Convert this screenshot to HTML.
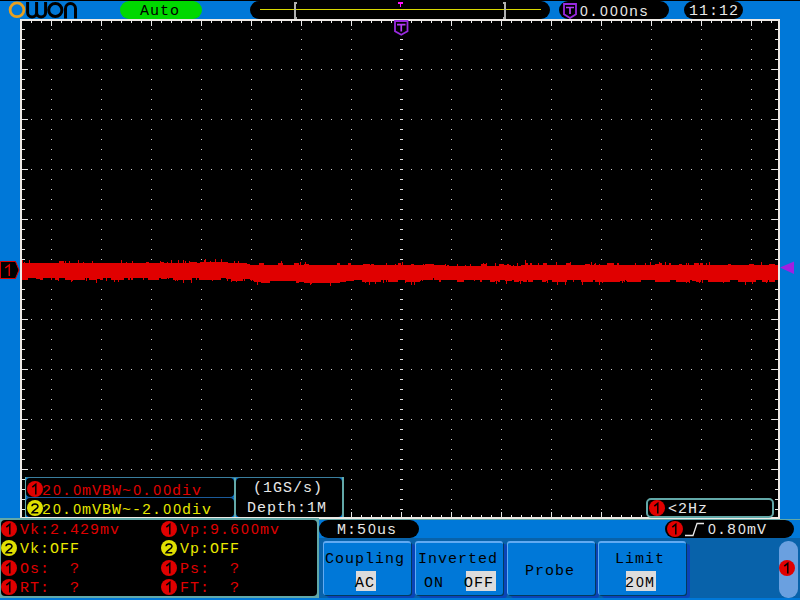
<!DOCTYPE html>
<html><head><meta charset="utf-8"><style>
*{margin:0;padding:0;box-sizing:border-box}
html,body{width:800px;height:600px;overflow:hidden;background:#0078d8}
body{position:relative;font-family:"Liberation Mono",monospace;font-size:15px;letter-spacing:1px;line-height:20px}
.a{position:absolute}
.t{position:absolute;white-space:pre;line-height:20px;height:20px}
.pill{position:absolute;background:#000;border-radius:9px/9px}
.circ{position:absolute;width:16px;height:16px;border-radius:50%;font-family:"Liberation Sans",sans-serif;font-size:13px;letter-spacing:0;line-height:16px;text-align:center;color:#000}
.btn{position:absolute;top:541px;height:54px;background:#0078d8;border-radius:3px;border-top:2px solid #62aaf2;border-left:1px solid #62aaf2;box-shadow:1px 1px 0 0 #033a5e,4px 3px 0 0 #0a44b8}
.z{display:inline-block;width:10px;text-align:center;font-family:"Liberation Sans",sans-serif;font-size:14px;letter-spacing:0;line-height:0}
.hl{position:absolute;background:#dcdcdc;height:20px}
</style></head><body>
<svg width="0" height="0" style="position:absolute">
 <symbol id="c1" viewBox="0 0 16 16"><circle cx="8" cy="8" r="8" fill="#e00000"/><path d="M5.3 6.2L8.8 3.3V13.6" fill="none" stroke="#000" stroke-width="1.5"/></symbol>
 <symbol id="c2" viewBox="0 0 16 16"><circle cx="8" cy="8" r="8" fill="#e0e000"/><path d="M5 6.3C5 3.4 11 3.2 11 6.4C11 8.6 6 10.2 5 12.8H11.3" fill="none" stroke="#000" stroke-width="1.5"/></symbol>
</svg>
<div class="a" style="left:0;top:0;width:800px;height:1px;background:#000"></div>
<svg class="a" style="left:0;top:0" width="80" height="20" viewBox="0 0 80 20">
 <circle cx="17" cy="9.8" r="6.9" fill="none" stroke="#e8a020" stroke-width="2.8"/>
 <path d="M27.6 2V12.6a4.5 4.5 0 0 0 9 0V2M36.6 12.6a4.5 4.5 0 0 0 9 0V2" fill="none" stroke="#000" stroke-width="3"/>
 <circle cx="55.3" cy="10" r="6.6" fill="none" stroke="#000" stroke-width="3"/>
 <path d="M65.5 18.5V8.5a5 5 0 0 1 10 0V18.5" fill="none" stroke="#000" stroke-width="3"/>
</svg>
<div class="a" style="left:120px;top:1px;width:82px;height:18px;background:#00d800;border-radius:9px"></div>
<div class="t" style="left:140px;top:2px;color:#000">Auto</div>
<div class="pill" style="left:250px;top:1px;width:300px;height:18px"></div>
<div class="a" style="left:260px;top:9px;width:281px;height:1px;background:#d8d800"></div>
<svg class="a" style="left:0;top:0" width="800" height="40">
 <path d="M294 2h3v2h-1v13h1v2h-3z" fill="#b0b0b0"/>
 <path d="M506 2h-3v2h1v13h-1v2h3z" fill="#b0b0b0"/>
 <path d="M398 2h5v2h-2v3h-1v-3h-2z" fill="#ff10ff"/>
</svg>
<div class="pill" style="left:559px;top:1px;width:110px;height:18px"></div>
<svg class="a" style="left:563px;top:3px" width="14" height="16" viewBox="0 0 14 16">
 <path d="M1 1h12v10.2l-6 3.8l-6-3.8z" fill="none" stroke="#9a2ae0" stroke-width="1.8"/>
 <path d="M3 4.5h8M7 4.5v6.5" stroke="#b43cf5" stroke-width="1.7"/>
</svg>
<div class="t" style="left:579px;top:3px;color:#e8e8e8"><span class="z">0</span>.<span class="z">0</span><span class="z">0</span><span class="z">0</span>ns</div>
<div class="pill" style="left:684px;top:1px;width:59px;height:18px"></div>
<div class="t" style="left:689px;top:2px;color:#e8e8e8">11:12</div>

<div class="a" style="left:20px;top:19px;width:760px;height:500px;background:#eeeae6"></div>
<div class="a" style="left:22px;top:21px;width:756px;height:496px;background:#000"></div>
<svg class="a" style="left:0;top:0" width="800" height="600">
<path fill="#c8c8c8" d="M51 29h1v1h-1zM51 39h1v1h-1zM51 49h1v1h-1zM51 59h1v1h-1zM51 69h1v1h-1zM51 79h1v1h-1zM51 89h1v1h-1zM51 99h1v1h-1zM51 109h1v1h-1zM51 119h1v1h-1zM51 129h1v1h-1zM51 139h1v1h-1zM51 149h1v1h-1zM51 159h1v1h-1zM51 169h1v1h-1zM51 179h1v1h-1zM51 189h1v1h-1zM51 199h1v1h-1zM51 209h1v1h-1zM51 219h1v1h-1zM51 229h1v1h-1zM51 239h1v1h-1zM51 249h1v1h-1zM51 259h1v1h-1zM51 269h1v1h-1zM51 279h1v1h-1zM51 289h1v1h-1zM51 299h1v1h-1zM51 309h1v1h-1zM51 319h1v1h-1zM51 329h1v1h-1zM51 339h1v1h-1zM51 349h1v1h-1zM51 359h1v1h-1zM51 369h1v1h-1zM51 379h1v1h-1zM51 389h1v1h-1zM51 399h1v1h-1zM51 409h1v1h-1zM51 419h1v1h-1zM51 429h1v1h-1zM51 439h1v1h-1zM51 449h1v1h-1zM51 459h1v1h-1zM51 469h1v1h-1zM51 479h1v1h-1zM51 489h1v1h-1zM51 499h1v1h-1zM51 509h1v1h-1zM101 29h1v1h-1zM101 39h1v1h-1zM101 49h1v1h-1zM101 59h1v1h-1zM101 69h1v1h-1zM101 79h1v1h-1zM101 89h1v1h-1zM101 99h1v1h-1zM101 109h1v1h-1zM101 119h1v1h-1zM101 129h1v1h-1zM101 139h1v1h-1zM101 149h1v1h-1zM101 159h1v1h-1zM101 169h1v1h-1zM101 179h1v1h-1zM101 189h1v1h-1zM101 199h1v1h-1zM101 209h1v1h-1zM101 219h1v1h-1zM101 229h1v1h-1zM101 239h1v1h-1zM101 249h1v1h-1zM101 259h1v1h-1zM101 269h1v1h-1zM101 279h1v1h-1zM101 289h1v1h-1zM101 299h1v1h-1zM101 309h1v1h-1zM101 319h1v1h-1zM101 329h1v1h-1zM101 339h1v1h-1zM101 349h1v1h-1zM101 359h1v1h-1zM101 369h1v1h-1zM101 379h1v1h-1zM101 389h1v1h-1zM101 399h1v1h-1zM101 409h1v1h-1zM101 419h1v1h-1zM101 429h1v1h-1zM101 439h1v1h-1zM101 449h1v1h-1zM101 459h1v1h-1zM101 469h1v1h-1zM101 479h1v1h-1zM101 489h1v1h-1zM101 499h1v1h-1zM101 509h1v1h-1zM151 29h1v1h-1zM151 39h1v1h-1zM151 49h1v1h-1zM151 59h1v1h-1zM151 69h1v1h-1zM151 79h1v1h-1zM151 89h1v1h-1zM151 99h1v1h-1zM151 109h1v1h-1zM151 119h1v1h-1zM151 129h1v1h-1zM151 139h1v1h-1zM151 149h1v1h-1zM151 159h1v1h-1zM151 169h1v1h-1zM151 179h1v1h-1zM151 189h1v1h-1zM151 199h1v1h-1zM151 209h1v1h-1zM151 219h1v1h-1zM151 229h1v1h-1zM151 239h1v1h-1zM151 249h1v1h-1zM151 259h1v1h-1zM151 269h1v1h-1zM151 279h1v1h-1zM151 289h1v1h-1zM151 299h1v1h-1zM151 309h1v1h-1zM151 319h1v1h-1zM151 329h1v1h-1zM151 339h1v1h-1zM151 349h1v1h-1zM151 359h1v1h-1zM151 369h1v1h-1zM151 379h1v1h-1zM151 389h1v1h-1zM151 399h1v1h-1zM151 409h1v1h-1zM151 419h1v1h-1zM151 429h1v1h-1zM151 439h1v1h-1zM151 449h1v1h-1zM151 459h1v1h-1zM151 469h1v1h-1zM151 479h1v1h-1zM151 489h1v1h-1zM151 499h1v1h-1zM151 509h1v1h-1zM201 29h1v1h-1zM201 39h1v1h-1zM201 49h1v1h-1zM201 59h1v1h-1zM201 69h1v1h-1zM201 79h1v1h-1zM201 89h1v1h-1zM201 99h1v1h-1zM201 109h1v1h-1zM201 119h1v1h-1zM201 129h1v1h-1zM201 139h1v1h-1zM201 149h1v1h-1zM201 159h1v1h-1zM201 169h1v1h-1zM201 179h1v1h-1zM201 189h1v1h-1zM201 199h1v1h-1zM201 209h1v1h-1zM201 219h1v1h-1zM201 229h1v1h-1zM201 239h1v1h-1zM201 249h1v1h-1zM201 259h1v1h-1zM201 269h1v1h-1zM201 279h1v1h-1zM201 289h1v1h-1zM201 299h1v1h-1zM201 309h1v1h-1zM201 319h1v1h-1zM201 329h1v1h-1zM201 339h1v1h-1zM201 349h1v1h-1zM201 359h1v1h-1zM201 369h1v1h-1zM201 379h1v1h-1zM201 389h1v1h-1zM201 399h1v1h-1zM201 409h1v1h-1zM201 419h1v1h-1zM201 429h1v1h-1zM201 439h1v1h-1zM201 449h1v1h-1zM201 459h1v1h-1zM201 469h1v1h-1zM201 479h1v1h-1zM201 489h1v1h-1zM201 499h1v1h-1zM201 509h1v1h-1zM251 29h1v1h-1zM251 39h1v1h-1zM251 49h1v1h-1zM251 59h1v1h-1zM251 69h1v1h-1zM251 79h1v1h-1zM251 89h1v1h-1zM251 99h1v1h-1zM251 109h1v1h-1zM251 119h1v1h-1zM251 129h1v1h-1zM251 139h1v1h-1zM251 149h1v1h-1zM251 159h1v1h-1zM251 169h1v1h-1zM251 179h1v1h-1zM251 189h1v1h-1zM251 199h1v1h-1zM251 209h1v1h-1zM251 219h1v1h-1zM251 229h1v1h-1zM251 239h1v1h-1zM251 249h1v1h-1zM251 259h1v1h-1zM251 269h1v1h-1zM251 279h1v1h-1zM251 289h1v1h-1zM251 299h1v1h-1zM251 309h1v1h-1zM251 319h1v1h-1zM251 329h1v1h-1zM251 339h1v1h-1zM251 349h1v1h-1zM251 359h1v1h-1zM251 369h1v1h-1zM251 379h1v1h-1zM251 389h1v1h-1zM251 399h1v1h-1zM251 409h1v1h-1zM251 419h1v1h-1zM251 429h1v1h-1zM251 439h1v1h-1zM251 449h1v1h-1zM251 459h1v1h-1zM251 469h1v1h-1zM251 479h1v1h-1zM251 489h1v1h-1zM251 499h1v1h-1zM251 509h1v1h-1zM301 29h1v1h-1zM301 39h1v1h-1zM301 49h1v1h-1zM301 59h1v1h-1zM301 69h1v1h-1zM301 79h1v1h-1zM301 89h1v1h-1zM301 99h1v1h-1zM301 109h1v1h-1zM301 119h1v1h-1zM301 129h1v1h-1zM301 139h1v1h-1zM301 149h1v1h-1zM301 159h1v1h-1zM301 169h1v1h-1zM301 179h1v1h-1zM301 189h1v1h-1zM301 199h1v1h-1zM301 209h1v1h-1zM301 219h1v1h-1zM301 229h1v1h-1zM301 239h1v1h-1zM301 249h1v1h-1zM301 259h1v1h-1zM301 269h1v1h-1zM301 279h1v1h-1zM301 289h1v1h-1zM301 299h1v1h-1zM301 309h1v1h-1zM301 319h1v1h-1zM301 329h1v1h-1zM301 339h1v1h-1zM301 349h1v1h-1zM301 359h1v1h-1zM301 369h1v1h-1zM301 379h1v1h-1zM301 389h1v1h-1zM301 399h1v1h-1zM301 409h1v1h-1zM301 419h1v1h-1zM301 429h1v1h-1zM301 439h1v1h-1zM301 449h1v1h-1zM301 459h1v1h-1zM301 469h1v1h-1zM301 479h1v1h-1zM301 489h1v1h-1zM301 499h1v1h-1zM301 509h1v1h-1zM351 29h1v1h-1zM351 39h1v1h-1zM351 49h1v1h-1zM351 59h1v1h-1zM351 69h1v1h-1zM351 79h1v1h-1zM351 89h1v1h-1zM351 99h1v1h-1zM351 109h1v1h-1zM351 119h1v1h-1zM351 129h1v1h-1zM351 139h1v1h-1zM351 149h1v1h-1zM351 159h1v1h-1zM351 169h1v1h-1zM351 179h1v1h-1zM351 189h1v1h-1zM351 199h1v1h-1zM351 209h1v1h-1zM351 219h1v1h-1zM351 229h1v1h-1zM351 239h1v1h-1zM351 249h1v1h-1zM351 259h1v1h-1zM351 269h1v1h-1zM351 279h1v1h-1zM351 289h1v1h-1zM351 299h1v1h-1zM351 309h1v1h-1zM351 319h1v1h-1zM351 329h1v1h-1zM351 339h1v1h-1zM351 349h1v1h-1zM351 359h1v1h-1zM351 369h1v1h-1zM351 379h1v1h-1zM351 389h1v1h-1zM351 399h1v1h-1zM351 409h1v1h-1zM351 419h1v1h-1zM351 429h1v1h-1zM351 439h1v1h-1zM351 449h1v1h-1zM351 459h1v1h-1zM351 469h1v1h-1zM351 479h1v1h-1zM351 489h1v1h-1zM351 499h1v1h-1zM351 509h1v1h-1zM451 29h1v1h-1zM451 39h1v1h-1zM451 49h1v1h-1zM451 59h1v1h-1zM451 69h1v1h-1zM451 79h1v1h-1zM451 89h1v1h-1zM451 99h1v1h-1zM451 109h1v1h-1zM451 119h1v1h-1zM451 129h1v1h-1zM451 139h1v1h-1zM451 149h1v1h-1zM451 159h1v1h-1zM451 169h1v1h-1zM451 179h1v1h-1zM451 189h1v1h-1zM451 199h1v1h-1zM451 209h1v1h-1zM451 219h1v1h-1zM451 229h1v1h-1zM451 239h1v1h-1zM451 249h1v1h-1zM451 259h1v1h-1zM451 269h1v1h-1zM451 279h1v1h-1zM451 289h1v1h-1zM451 299h1v1h-1zM451 309h1v1h-1zM451 319h1v1h-1zM451 329h1v1h-1zM451 339h1v1h-1zM451 349h1v1h-1zM451 359h1v1h-1zM451 369h1v1h-1zM451 379h1v1h-1zM451 389h1v1h-1zM451 399h1v1h-1zM451 409h1v1h-1zM451 419h1v1h-1zM451 429h1v1h-1zM451 439h1v1h-1zM451 449h1v1h-1zM451 459h1v1h-1zM451 469h1v1h-1zM451 479h1v1h-1zM451 489h1v1h-1zM451 499h1v1h-1zM451 509h1v1h-1zM501 29h1v1h-1zM501 39h1v1h-1zM501 49h1v1h-1zM501 59h1v1h-1zM501 69h1v1h-1zM501 79h1v1h-1zM501 89h1v1h-1zM501 99h1v1h-1zM501 109h1v1h-1zM501 119h1v1h-1zM501 129h1v1h-1zM501 139h1v1h-1zM501 149h1v1h-1zM501 159h1v1h-1zM501 169h1v1h-1zM501 179h1v1h-1zM501 189h1v1h-1zM501 199h1v1h-1zM501 209h1v1h-1zM501 219h1v1h-1zM501 229h1v1h-1zM501 239h1v1h-1zM501 249h1v1h-1zM501 259h1v1h-1zM501 269h1v1h-1zM501 279h1v1h-1zM501 289h1v1h-1zM501 299h1v1h-1zM501 309h1v1h-1zM501 319h1v1h-1zM501 329h1v1h-1zM501 339h1v1h-1zM501 349h1v1h-1zM501 359h1v1h-1zM501 369h1v1h-1zM501 379h1v1h-1zM501 389h1v1h-1zM501 399h1v1h-1zM501 409h1v1h-1zM501 419h1v1h-1zM501 429h1v1h-1zM501 439h1v1h-1zM501 449h1v1h-1zM501 459h1v1h-1zM501 469h1v1h-1zM501 479h1v1h-1zM501 489h1v1h-1zM501 499h1v1h-1zM501 509h1v1h-1zM551 29h1v1h-1zM551 39h1v1h-1zM551 49h1v1h-1zM551 59h1v1h-1zM551 69h1v1h-1zM551 79h1v1h-1zM551 89h1v1h-1zM551 99h1v1h-1zM551 109h1v1h-1zM551 119h1v1h-1zM551 129h1v1h-1zM551 139h1v1h-1zM551 149h1v1h-1zM551 159h1v1h-1zM551 169h1v1h-1zM551 179h1v1h-1zM551 189h1v1h-1zM551 199h1v1h-1zM551 209h1v1h-1zM551 219h1v1h-1zM551 229h1v1h-1zM551 239h1v1h-1zM551 249h1v1h-1zM551 259h1v1h-1zM551 269h1v1h-1zM551 279h1v1h-1zM551 289h1v1h-1zM551 299h1v1h-1zM551 309h1v1h-1zM551 319h1v1h-1zM551 329h1v1h-1zM551 339h1v1h-1zM551 349h1v1h-1zM551 359h1v1h-1zM551 369h1v1h-1zM551 379h1v1h-1zM551 389h1v1h-1zM551 399h1v1h-1zM551 409h1v1h-1zM551 419h1v1h-1zM551 429h1v1h-1zM551 439h1v1h-1zM551 449h1v1h-1zM551 459h1v1h-1zM551 469h1v1h-1zM551 479h1v1h-1zM551 489h1v1h-1zM551 499h1v1h-1zM551 509h1v1h-1zM601 29h1v1h-1zM601 39h1v1h-1zM601 49h1v1h-1zM601 59h1v1h-1zM601 69h1v1h-1zM601 79h1v1h-1zM601 89h1v1h-1zM601 99h1v1h-1zM601 109h1v1h-1zM601 119h1v1h-1zM601 129h1v1h-1zM601 139h1v1h-1zM601 149h1v1h-1zM601 159h1v1h-1zM601 169h1v1h-1zM601 179h1v1h-1zM601 189h1v1h-1zM601 199h1v1h-1zM601 209h1v1h-1zM601 219h1v1h-1zM601 229h1v1h-1zM601 239h1v1h-1zM601 249h1v1h-1zM601 259h1v1h-1zM601 269h1v1h-1zM601 279h1v1h-1zM601 289h1v1h-1zM601 299h1v1h-1zM601 309h1v1h-1zM601 319h1v1h-1zM601 329h1v1h-1zM601 339h1v1h-1zM601 349h1v1h-1zM601 359h1v1h-1zM601 369h1v1h-1zM601 379h1v1h-1zM601 389h1v1h-1zM601 399h1v1h-1zM601 409h1v1h-1zM601 419h1v1h-1zM601 429h1v1h-1zM601 439h1v1h-1zM601 449h1v1h-1zM601 459h1v1h-1zM601 469h1v1h-1zM601 479h1v1h-1zM601 489h1v1h-1zM601 499h1v1h-1zM601 509h1v1h-1zM651 29h1v1h-1zM651 39h1v1h-1zM651 49h1v1h-1zM651 59h1v1h-1zM651 69h1v1h-1zM651 79h1v1h-1zM651 89h1v1h-1zM651 99h1v1h-1zM651 109h1v1h-1zM651 119h1v1h-1zM651 129h1v1h-1zM651 139h1v1h-1zM651 149h1v1h-1zM651 159h1v1h-1zM651 169h1v1h-1zM651 179h1v1h-1zM651 189h1v1h-1zM651 199h1v1h-1zM651 209h1v1h-1zM651 219h1v1h-1zM651 229h1v1h-1zM651 239h1v1h-1zM651 249h1v1h-1zM651 259h1v1h-1zM651 269h1v1h-1zM651 279h1v1h-1zM651 289h1v1h-1zM651 299h1v1h-1zM651 309h1v1h-1zM651 319h1v1h-1zM651 329h1v1h-1zM651 339h1v1h-1zM651 349h1v1h-1zM651 359h1v1h-1zM651 369h1v1h-1zM651 379h1v1h-1zM651 389h1v1h-1zM651 399h1v1h-1zM651 409h1v1h-1zM651 419h1v1h-1zM651 429h1v1h-1zM651 439h1v1h-1zM651 449h1v1h-1zM651 459h1v1h-1zM651 469h1v1h-1zM651 479h1v1h-1zM651 489h1v1h-1zM651 499h1v1h-1zM651 509h1v1h-1zM701 29h1v1h-1zM701 39h1v1h-1zM701 49h1v1h-1zM701 59h1v1h-1zM701 69h1v1h-1zM701 79h1v1h-1zM701 89h1v1h-1zM701 99h1v1h-1zM701 109h1v1h-1zM701 119h1v1h-1zM701 129h1v1h-1zM701 139h1v1h-1zM701 149h1v1h-1zM701 159h1v1h-1zM701 169h1v1h-1zM701 179h1v1h-1zM701 189h1v1h-1zM701 199h1v1h-1zM701 209h1v1h-1zM701 219h1v1h-1zM701 229h1v1h-1zM701 239h1v1h-1zM701 249h1v1h-1zM701 259h1v1h-1zM701 269h1v1h-1zM701 279h1v1h-1zM701 289h1v1h-1zM701 299h1v1h-1zM701 309h1v1h-1zM701 319h1v1h-1zM701 329h1v1h-1zM701 339h1v1h-1zM701 349h1v1h-1zM701 359h1v1h-1zM701 369h1v1h-1zM701 379h1v1h-1zM701 389h1v1h-1zM701 399h1v1h-1zM701 409h1v1h-1zM701 419h1v1h-1zM701 429h1v1h-1zM701 439h1v1h-1zM701 449h1v1h-1zM701 459h1v1h-1zM701 469h1v1h-1zM701 479h1v1h-1zM701 489h1v1h-1zM701 499h1v1h-1zM701 509h1v1h-1zM751 29h1v1h-1zM751 39h1v1h-1zM751 49h1v1h-1zM751 59h1v1h-1zM751 69h1v1h-1zM751 79h1v1h-1zM751 89h1v1h-1zM751 99h1v1h-1zM751 109h1v1h-1zM751 119h1v1h-1zM751 129h1v1h-1zM751 139h1v1h-1zM751 149h1v1h-1zM751 159h1v1h-1zM751 169h1v1h-1zM751 179h1v1h-1zM751 189h1v1h-1zM751 199h1v1h-1zM751 209h1v1h-1zM751 219h1v1h-1zM751 229h1v1h-1zM751 239h1v1h-1zM751 249h1v1h-1zM751 259h1v1h-1zM751 269h1v1h-1zM751 279h1v1h-1zM751 289h1v1h-1zM751 299h1v1h-1zM751 309h1v1h-1zM751 319h1v1h-1zM751 329h1v1h-1zM751 339h1v1h-1zM751 349h1v1h-1zM751 359h1v1h-1zM751 369h1v1h-1zM751 379h1v1h-1zM751 389h1v1h-1zM751 399h1v1h-1zM751 409h1v1h-1zM751 419h1v1h-1zM751 429h1v1h-1zM751 439h1v1h-1zM751 449h1v1h-1zM751 459h1v1h-1zM751 469h1v1h-1zM751 479h1v1h-1zM751 489h1v1h-1zM751 499h1v1h-1zM751 509h1v1h-1zM31 69h1v1h-1zM41 69h1v1h-1zM61 69h1v1h-1zM71 69h1v1h-1zM81 69h1v1h-1zM91 69h1v1h-1zM111 69h1v1h-1zM121 69h1v1h-1zM131 69h1v1h-1zM141 69h1v1h-1zM161 69h1v1h-1zM171 69h1v1h-1zM181 69h1v1h-1zM191 69h1v1h-1zM211 69h1v1h-1zM221 69h1v1h-1zM231 69h1v1h-1zM241 69h1v1h-1zM261 69h1v1h-1zM271 69h1v1h-1zM281 69h1v1h-1zM291 69h1v1h-1zM311 69h1v1h-1zM321 69h1v1h-1zM331 69h1v1h-1zM341 69h1v1h-1zM361 69h1v1h-1zM371 69h1v1h-1zM381 69h1v1h-1zM391 69h1v1h-1zM411 69h1v1h-1zM421 69h1v1h-1zM431 69h1v1h-1zM441 69h1v1h-1zM461 69h1v1h-1zM471 69h1v1h-1zM481 69h1v1h-1zM491 69h1v1h-1zM511 69h1v1h-1zM521 69h1v1h-1zM531 69h1v1h-1zM541 69h1v1h-1zM561 69h1v1h-1zM571 69h1v1h-1zM581 69h1v1h-1zM591 69h1v1h-1zM611 69h1v1h-1zM621 69h1v1h-1zM631 69h1v1h-1zM641 69h1v1h-1zM661 69h1v1h-1zM671 69h1v1h-1zM681 69h1v1h-1zM691 69h1v1h-1zM711 69h1v1h-1zM721 69h1v1h-1zM731 69h1v1h-1zM741 69h1v1h-1zM761 69h1v1h-1zM771 69h1v1h-1zM31 119h1v1h-1zM41 119h1v1h-1zM61 119h1v1h-1zM71 119h1v1h-1zM81 119h1v1h-1zM91 119h1v1h-1zM111 119h1v1h-1zM121 119h1v1h-1zM131 119h1v1h-1zM141 119h1v1h-1zM161 119h1v1h-1zM171 119h1v1h-1zM181 119h1v1h-1zM191 119h1v1h-1zM211 119h1v1h-1zM221 119h1v1h-1zM231 119h1v1h-1zM241 119h1v1h-1zM261 119h1v1h-1zM271 119h1v1h-1zM281 119h1v1h-1zM291 119h1v1h-1zM311 119h1v1h-1zM321 119h1v1h-1zM331 119h1v1h-1zM341 119h1v1h-1zM361 119h1v1h-1zM371 119h1v1h-1zM381 119h1v1h-1zM391 119h1v1h-1zM411 119h1v1h-1zM421 119h1v1h-1zM431 119h1v1h-1zM441 119h1v1h-1zM461 119h1v1h-1zM471 119h1v1h-1zM481 119h1v1h-1zM491 119h1v1h-1zM511 119h1v1h-1zM521 119h1v1h-1zM531 119h1v1h-1zM541 119h1v1h-1zM561 119h1v1h-1zM571 119h1v1h-1zM581 119h1v1h-1zM591 119h1v1h-1zM611 119h1v1h-1zM621 119h1v1h-1zM631 119h1v1h-1zM641 119h1v1h-1zM661 119h1v1h-1zM671 119h1v1h-1zM681 119h1v1h-1zM691 119h1v1h-1zM711 119h1v1h-1zM721 119h1v1h-1zM731 119h1v1h-1zM741 119h1v1h-1zM761 119h1v1h-1zM771 119h1v1h-1zM31 169h1v1h-1zM41 169h1v1h-1zM61 169h1v1h-1zM71 169h1v1h-1zM81 169h1v1h-1zM91 169h1v1h-1zM111 169h1v1h-1zM121 169h1v1h-1zM131 169h1v1h-1zM141 169h1v1h-1zM161 169h1v1h-1zM171 169h1v1h-1zM181 169h1v1h-1zM191 169h1v1h-1zM211 169h1v1h-1zM221 169h1v1h-1zM231 169h1v1h-1zM241 169h1v1h-1zM261 169h1v1h-1zM271 169h1v1h-1zM281 169h1v1h-1zM291 169h1v1h-1zM311 169h1v1h-1zM321 169h1v1h-1zM331 169h1v1h-1zM341 169h1v1h-1zM361 169h1v1h-1zM371 169h1v1h-1zM381 169h1v1h-1zM391 169h1v1h-1zM411 169h1v1h-1zM421 169h1v1h-1zM431 169h1v1h-1zM441 169h1v1h-1zM461 169h1v1h-1zM471 169h1v1h-1zM481 169h1v1h-1zM491 169h1v1h-1zM511 169h1v1h-1zM521 169h1v1h-1zM531 169h1v1h-1zM541 169h1v1h-1zM561 169h1v1h-1zM571 169h1v1h-1zM581 169h1v1h-1zM591 169h1v1h-1zM611 169h1v1h-1zM621 169h1v1h-1zM631 169h1v1h-1zM641 169h1v1h-1zM661 169h1v1h-1zM671 169h1v1h-1zM681 169h1v1h-1zM691 169h1v1h-1zM711 169h1v1h-1zM721 169h1v1h-1zM731 169h1v1h-1zM741 169h1v1h-1zM761 169h1v1h-1zM771 169h1v1h-1zM31 219h1v1h-1zM41 219h1v1h-1zM61 219h1v1h-1zM71 219h1v1h-1zM81 219h1v1h-1zM91 219h1v1h-1zM111 219h1v1h-1zM121 219h1v1h-1zM131 219h1v1h-1zM141 219h1v1h-1zM161 219h1v1h-1zM171 219h1v1h-1zM181 219h1v1h-1zM191 219h1v1h-1zM211 219h1v1h-1zM221 219h1v1h-1zM231 219h1v1h-1zM241 219h1v1h-1zM261 219h1v1h-1zM271 219h1v1h-1zM281 219h1v1h-1zM291 219h1v1h-1zM311 219h1v1h-1zM321 219h1v1h-1zM331 219h1v1h-1zM341 219h1v1h-1zM361 219h1v1h-1zM371 219h1v1h-1zM381 219h1v1h-1zM391 219h1v1h-1zM411 219h1v1h-1zM421 219h1v1h-1zM431 219h1v1h-1zM441 219h1v1h-1zM461 219h1v1h-1zM471 219h1v1h-1zM481 219h1v1h-1zM491 219h1v1h-1zM511 219h1v1h-1zM521 219h1v1h-1zM531 219h1v1h-1zM541 219h1v1h-1zM561 219h1v1h-1zM571 219h1v1h-1zM581 219h1v1h-1zM591 219h1v1h-1zM611 219h1v1h-1zM621 219h1v1h-1zM631 219h1v1h-1zM641 219h1v1h-1zM661 219h1v1h-1zM671 219h1v1h-1zM681 219h1v1h-1zM691 219h1v1h-1zM711 219h1v1h-1zM721 219h1v1h-1zM731 219h1v1h-1zM741 219h1v1h-1zM761 219h1v1h-1zM771 219h1v1h-1zM31 319h1v1h-1zM41 319h1v1h-1zM61 319h1v1h-1zM71 319h1v1h-1zM81 319h1v1h-1zM91 319h1v1h-1zM111 319h1v1h-1zM121 319h1v1h-1zM131 319h1v1h-1zM141 319h1v1h-1zM161 319h1v1h-1zM171 319h1v1h-1zM181 319h1v1h-1zM191 319h1v1h-1zM211 319h1v1h-1zM221 319h1v1h-1zM231 319h1v1h-1zM241 319h1v1h-1zM261 319h1v1h-1zM271 319h1v1h-1zM281 319h1v1h-1zM291 319h1v1h-1zM311 319h1v1h-1zM321 319h1v1h-1zM331 319h1v1h-1zM341 319h1v1h-1zM361 319h1v1h-1zM371 319h1v1h-1zM381 319h1v1h-1zM391 319h1v1h-1zM411 319h1v1h-1zM421 319h1v1h-1zM431 319h1v1h-1zM441 319h1v1h-1zM461 319h1v1h-1zM471 319h1v1h-1zM481 319h1v1h-1zM491 319h1v1h-1zM511 319h1v1h-1zM521 319h1v1h-1zM531 319h1v1h-1zM541 319h1v1h-1zM561 319h1v1h-1zM571 319h1v1h-1zM581 319h1v1h-1zM591 319h1v1h-1zM611 319h1v1h-1zM621 319h1v1h-1zM631 319h1v1h-1zM641 319h1v1h-1zM661 319h1v1h-1zM671 319h1v1h-1zM681 319h1v1h-1zM691 319h1v1h-1zM711 319h1v1h-1zM721 319h1v1h-1zM731 319h1v1h-1zM741 319h1v1h-1zM761 319h1v1h-1zM771 319h1v1h-1zM31 369h1v1h-1zM41 369h1v1h-1zM61 369h1v1h-1zM71 369h1v1h-1zM81 369h1v1h-1zM91 369h1v1h-1zM111 369h1v1h-1zM121 369h1v1h-1zM131 369h1v1h-1zM141 369h1v1h-1zM161 369h1v1h-1zM171 369h1v1h-1zM181 369h1v1h-1zM191 369h1v1h-1zM211 369h1v1h-1zM221 369h1v1h-1zM231 369h1v1h-1zM241 369h1v1h-1zM261 369h1v1h-1zM271 369h1v1h-1zM281 369h1v1h-1zM291 369h1v1h-1zM311 369h1v1h-1zM321 369h1v1h-1zM331 369h1v1h-1zM341 369h1v1h-1zM361 369h1v1h-1zM371 369h1v1h-1zM381 369h1v1h-1zM391 369h1v1h-1zM411 369h1v1h-1zM421 369h1v1h-1zM431 369h1v1h-1zM441 369h1v1h-1zM461 369h1v1h-1zM471 369h1v1h-1zM481 369h1v1h-1zM491 369h1v1h-1zM511 369h1v1h-1zM521 369h1v1h-1zM531 369h1v1h-1zM541 369h1v1h-1zM561 369h1v1h-1zM571 369h1v1h-1zM581 369h1v1h-1zM591 369h1v1h-1zM611 369h1v1h-1zM621 369h1v1h-1zM631 369h1v1h-1zM641 369h1v1h-1zM661 369h1v1h-1zM671 369h1v1h-1zM681 369h1v1h-1zM691 369h1v1h-1zM711 369h1v1h-1zM721 369h1v1h-1zM731 369h1v1h-1zM741 369h1v1h-1zM761 369h1v1h-1zM771 369h1v1h-1zM31 419h1v1h-1zM41 419h1v1h-1zM61 419h1v1h-1zM71 419h1v1h-1zM81 419h1v1h-1zM91 419h1v1h-1zM111 419h1v1h-1zM121 419h1v1h-1zM131 419h1v1h-1zM141 419h1v1h-1zM161 419h1v1h-1zM171 419h1v1h-1zM181 419h1v1h-1zM191 419h1v1h-1zM211 419h1v1h-1zM221 419h1v1h-1zM231 419h1v1h-1zM241 419h1v1h-1zM261 419h1v1h-1zM271 419h1v1h-1zM281 419h1v1h-1zM291 419h1v1h-1zM311 419h1v1h-1zM321 419h1v1h-1zM331 419h1v1h-1zM341 419h1v1h-1zM361 419h1v1h-1zM371 419h1v1h-1zM381 419h1v1h-1zM391 419h1v1h-1zM411 419h1v1h-1zM421 419h1v1h-1zM431 419h1v1h-1zM441 419h1v1h-1zM461 419h1v1h-1zM471 419h1v1h-1zM481 419h1v1h-1zM491 419h1v1h-1zM511 419h1v1h-1zM521 419h1v1h-1zM531 419h1v1h-1zM541 419h1v1h-1zM561 419h1v1h-1zM571 419h1v1h-1zM581 419h1v1h-1zM591 419h1v1h-1zM611 419h1v1h-1zM621 419h1v1h-1zM631 419h1v1h-1zM641 419h1v1h-1zM661 419h1v1h-1zM671 419h1v1h-1zM681 419h1v1h-1zM691 419h1v1h-1zM711 419h1v1h-1zM721 419h1v1h-1zM731 419h1v1h-1zM741 419h1v1h-1zM761 419h1v1h-1zM771 419h1v1h-1zM31 469h1v1h-1zM41 469h1v1h-1zM61 469h1v1h-1zM71 469h1v1h-1zM81 469h1v1h-1zM91 469h1v1h-1zM111 469h1v1h-1zM121 469h1v1h-1zM131 469h1v1h-1zM141 469h1v1h-1zM161 469h1v1h-1zM171 469h1v1h-1zM181 469h1v1h-1zM191 469h1v1h-1zM211 469h1v1h-1zM221 469h1v1h-1zM231 469h1v1h-1zM241 469h1v1h-1zM261 469h1v1h-1zM271 469h1v1h-1zM281 469h1v1h-1zM291 469h1v1h-1zM311 469h1v1h-1zM321 469h1v1h-1zM331 469h1v1h-1zM341 469h1v1h-1zM361 469h1v1h-1zM371 469h1v1h-1zM381 469h1v1h-1zM391 469h1v1h-1zM411 469h1v1h-1zM421 469h1v1h-1zM431 469h1v1h-1zM441 469h1v1h-1zM461 469h1v1h-1zM471 469h1v1h-1zM481 469h1v1h-1zM491 469h1v1h-1zM511 469h1v1h-1zM521 469h1v1h-1zM531 469h1v1h-1zM541 469h1v1h-1zM561 469h1v1h-1zM571 469h1v1h-1zM581 469h1v1h-1zM591 469h1v1h-1zM611 469h1v1h-1zM621 469h1v1h-1zM631 469h1v1h-1zM641 469h1v1h-1zM661 469h1v1h-1zM671 469h1v1h-1zM681 469h1v1h-1zM691 469h1v1h-1zM711 469h1v1h-1zM721 469h1v1h-1zM731 469h1v1h-1zM741 469h1v1h-1zM761 469h1v1h-1zM771 469h1v1h-1z"/><path fill="#e0e0e0" d="M400 29h3v1h-3zM400 39h3v1h-3zM400 49h3v1h-3zM400 59h3v1h-3zM400 69h3v1h-3zM400 79h3v1h-3zM400 89h3v1h-3zM400 99h3v1h-3zM400 109h3v1h-3zM400 119h3v1h-3zM400 129h3v1h-3zM400 139h3v1h-3zM400 149h3v1h-3zM400 159h3v1h-3zM400 169h3v1h-3zM400 179h3v1h-3zM400 189h3v1h-3zM400 199h3v1h-3zM400 209h3v1h-3zM400 219h3v1h-3zM400 229h3v1h-3zM400 239h3v1h-3zM400 249h3v1h-3zM400 259h3v1h-3zM400 269h3v1h-3zM400 279h3v1h-3zM400 289h3v1h-3zM400 299h3v1h-3zM400 309h3v1h-3zM400 319h3v1h-3zM400 329h3v1h-3zM400 339h3v1h-3zM400 349h3v1h-3zM400 359h3v1h-3zM400 369h3v1h-3zM400 379h3v1h-3zM400 389h3v1h-3zM400 399h3v1h-3zM400 409h3v1h-3zM400 419h3v1h-3zM400 429h3v1h-3zM400 439h3v1h-3zM400 449h3v1h-3zM400 459h3v1h-3zM400 469h3v1h-3zM400 479h3v1h-3zM400 489h3v1h-3zM400 499h3v1h-3zM400 509h3v1h-3zM31 268h1v3h-1zM41 268h1v3h-1zM51 268h1v3h-1zM61 268h1v3h-1zM71 268h1v3h-1zM81 268h1v3h-1zM91 268h1v3h-1zM101 268h1v3h-1zM111 268h1v3h-1zM121 268h1v3h-1zM131 268h1v3h-1zM141 268h1v3h-1zM151 268h1v3h-1zM161 268h1v3h-1zM171 268h1v3h-1zM181 268h1v3h-1zM191 268h1v3h-1zM201 268h1v3h-1zM211 268h1v3h-1zM221 268h1v3h-1zM231 268h1v3h-1zM241 268h1v3h-1zM251 268h1v3h-1zM261 268h1v3h-1zM271 268h1v3h-1zM281 268h1v3h-1zM291 268h1v3h-1zM301 268h1v3h-1zM311 268h1v3h-1zM321 268h1v3h-1zM331 268h1v3h-1zM341 268h1v3h-1zM351 268h1v3h-1zM361 268h1v3h-1zM371 268h1v3h-1zM381 268h1v3h-1zM391 268h1v3h-1zM401 268h1v3h-1zM411 268h1v3h-1zM421 268h1v3h-1zM431 268h1v3h-1zM441 268h1v3h-1zM451 268h1v3h-1zM461 268h1v3h-1zM471 268h1v3h-1zM481 268h1v3h-1zM491 268h1v3h-1zM501 268h1v3h-1zM511 268h1v3h-1zM521 268h1v3h-1zM531 268h1v3h-1zM541 268h1v3h-1zM551 268h1v3h-1zM561 268h1v3h-1zM571 268h1v3h-1zM581 268h1v3h-1zM591 268h1v3h-1zM601 268h1v3h-1zM611 268h1v3h-1zM621 268h1v3h-1zM631 268h1v3h-1zM641 268h1v3h-1zM651 268h1v3h-1zM661 268h1v3h-1zM671 268h1v3h-1zM681 268h1v3h-1zM691 268h1v3h-1zM701 268h1v3h-1zM711 268h1v3h-1zM721 268h1v3h-1zM731 268h1v3h-1zM741 268h1v3h-1zM751 268h1v3h-1zM761 268h1v3h-1zM771 268h1v3h-1z"/><path fill="#e8e8e8" d="M31 21h1v2h-1zM31 515h1v2h-1zM41 21h1v2h-1zM41 515h1v2h-1zM51 21h1v5h-1zM51 512h1v5h-1zM61 21h1v2h-1zM61 515h1v2h-1zM71 21h1v2h-1zM71 515h1v2h-1zM81 21h1v2h-1zM81 515h1v2h-1zM91 21h1v2h-1zM91 515h1v2h-1zM101 21h1v5h-1zM101 512h1v5h-1zM111 21h1v2h-1zM111 515h1v2h-1zM121 21h1v2h-1zM121 515h1v2h-1zM131 21h1v2h-1zM131 515h1v2h-1zM141 21h1v2h-1zM141 515h1v2h-1zM151 21h1v5h-1zM151 512h1v5h-1zM161 21h1v2h-1zM161 515h1v2h-1zM171 21h1v2h-1zM171 515h1v2h-1zM181 21h1v2h-1zM181 515h1v2h-1zM191 21h1v2h-1zM191 515h1v2h-1zM201 21h1v5h-1zM201 512h1v5h-1zM211 21h1v2h-1zM211 515h1v2h-1zM221 21h1v2h-1zM221 515h1v2h-1zM231 21h1v2h-1zM231 515h1v2h-1zM241 21h1v2h-1zM241 515h1v2h-1zM251 21h1v5h-1zM251 512h1v5h-1zM261 21h1v2h-1zM261 515h1v2h-1zM271 21h1v2h-1zM271 515h1v2h-1zM281 21h1v2h-1zM281 515h1v2h-1zM291 21h1v2h-1zM291 515h1v2h-1zM301 21h1v5h-1zM301 512h1v5h-1zM311 21h1v2h-1zM311 515h1v2h-1zM321 21h1v2h-1zM321 515h1v2h-1zM331 21h1v2h-1zM331 515h1v2h-1zM341 21h1v2h-1zM341 515h1v2h-1zM351 21h1v5h-1zM351 512h1v5h-1zM361 21h1v2h-1zM361 515h1v2h-1zM371 21h1v2h-1zM371 515h1v2h-1zM381 21h1v2h-1zM381 515h1v2h-1zM391 21h1v2h-1zM391 515h1v2h-1zM401 21h1v5h-1zM401 512h1v5h-1zM411 21h1v2h-1zM411 515h1v2h-1zM421 21h1v2h-1zM421 515h1v2h-1zM431 21h1v2h-1zM431 515h1v2h-1zM441 21h1v2h-1zM441 515h1v2h-1zM451 21h1v5h-1zM451 512h1v5h-1zM461 21h1v2h-1zM461 515h1v2h-1zM471 21h1v2h-1zM471 515h1v2h-1zM481 21h1v2h-1zM481 515h1v2h-1zM491 21h1v2h-1zM491 515h1v2h-1zM501 21h1v5h-1zM501 512h1v5h-1zM511 21h1v2h-1zM511 515h1v2h-1zM521 21h1v2h-1zM521 515h1v2h-1zM531 21h1v2h-1zM531 515h1v2h-1zM541 21h1v2h-1zM541 515h1v2h-1zM551 21h1v5h-1zM551 512h1v5h-1zM561 21h1v2h-1zM561 515h1v2h-1zM571 21h1v2h-1zM571 515h1v2h-1zM581 21h1v2h-1zM581 515h1v2h-1zM591 21h1v2h-1zM591 515h1v2h-1zM601 21h1v5h-1zM601 512h1v5h-1zM611 21h1v2h-1zM611 515h1v2h-1zM621 21h1v2h-1zM621 515h1v2h-1zM631 21h1v2h-1zM631 515h1v2h-1zM641 21h1v2h-1zM641 515h1v2h-1zM651 21h1v5h-1zM651 512h1v5h-1zM661 21h1v2h-1zM661 515h1v2h-1zM671 21h1v2h-1zM671 515h1v2h-1zM681 21h1v2h-1zM681 515h1v2h-1zM691 21h1v2h-1zM691 515h1v2h-1zM701 21h1v5h-1zM701 512h1v5h-1zM711 21h1v2h-1zM711 515h1v2h-1zM721 21h1v2h-1zM721 515h1v2h-1zM731 21h1v2h-1zM731 515h1v2h-1zM741 21h1v2h-1zM741 515h1v2h-1zM751 21h1v5h-1zM751 512h1v5h-1zM761 21h1v2h-1zM761 515h1v2h-1zM771 21h1v2h-1zM771 515h1v2h-1zM22 29h3v1h-3zM775 29h3v1h-3zM22 39h3v1h-3zM775 39h3v1h-3zM22 49h3v1h-3zM775 49h3v1h-3zM22 59h3v1h-3zM775 59h3v1h-3zM22 69h6v1h-6zM772 69h6v1h-6zM22 79h3v1h-3zM775 79h3v1h-3zM22 89h3v1h-3zM775 89h3v1h-3zM22 99h3v1h-3zM775 99h3v1h-3zM22 109h3v1h-3zM775 109h3v1h-3zM22 119h6v1h-6zM772 119h6v1h-6zM22 129h3v1h-3zM775 129h3v1h-3zM22 139h3v1h-3zM775 139h3v1h-3zM22 149h3v1h-3zM775 149h3v1h-3zM22 159h3v1h-3zM775 159h3v1h-3zM22 169h6v1h-6zM772 169h6v1h-6zM22 179h3v1h-3zM775 179h3v1h-3zM22 189h3v1h-3zM775 189h3v1h-3zM22 199h3v1h-3zM775 199h3v1h-3zM22 209h3v1h-3zM775 209h3v1h-3zM22 219h6v1h-6zM772 219h6v1h-6zM22 229h3v1h-3zM775 229h3v1h-3zM22 239h3v1h-3zM775 239h3v1h-3zM22 249h3v1h-3zM775 249h3v1h-3zM22 259h3v1h-3zM775 259h3v1h-3zM22 269h6v1h-6zM772 269h6v1h-6zM22 279h3v1h-3zM775 279h3v1h-3zM22 289h3v1h-3zM775 289h3v1h-3zM22 299h3v1h-3zM775 299h3v1h-3zM22 309h3v1h-3zM775 309h3v1h-3zM22 319h6v1h-6zM772 319h6v1h-6zM22 329h3v1h-3zM775 329h3v1h-3zM22 339h3v1h-3zM775 339h3v1h-3zM22 349h3v1h-3zM775 349h3v1h-3zM22 359h3v1h-3zM775 359h3v1h-3zM22 369h6v1h-6zM772 369h6v1h-6zM22 379h3v1h-3zM775 379h3v1h-3zM22 389h3v1h-3zM775 389h3v1h-3zM22 399h3v1h-3zM775 399h3v1h-3zM22 409h3v1h-3zM775 409h3v1h-3zM22 419h6v1h-6zM772 419h6v1h-6zM22 429h3v1h-3zM775 429h3v1h-3zM22 439h3v1h-3zM775 439h3v1h-3zM22 449h3v1h-3zM775 449h3v1h-3zM22 459h3v1h-3zM775 459h3v1h-3zM22 469h6v1h-6zM772 469h6v1h-6zM22 479h3v1h-3zM775 479h3v1h-3zM22 489h3v1h-3zM775 489h3v1h-3zM22 499h3v1h-3zM775 499h3v1h-3zM22 509h3v1h-3zM775 509h3v1h-3z"/>
<path fill="#e00000" d="M22 260h1V280h-1zM23 263h1V280h-1zM24 262h1V280h-1zM25 263h1V280h-1zM26 263h1V280h-1zM27 263h1V280h-1zM28 263h1V278h-1zM29 260h1V278h-1zM30 263h1V278h-1zM31 263h1V278h-1zM32 263h1V278h-1zM33 263h1V278h-1zM34 263h1V278h-1zM35 263h1V278h-1zM36 263h1V279h-1zM37 263h1V279h-1zM38 263h1V279h-1zM39 263h1V279h-1zM40 263h1V280h-1zM41 263h1V280h-1zM42 263h1V280h-1zM43 263h1V278h-1zM44 263h1V278h-1zM45 263h1V278h-1zM46 263h1V278h-1zM47 263h1V278h-1zM48 263h1V278h-1zM49 263h1V278h-1zM50 263h1V278h-1zM51 263h1V280h-1zM52 263h1V278h-1zM53 263h1V278h-1zM54 263h1V278h-1zM55 263h1V280h-1zM56 263h1V280h-1zM57 263h1V280h-1zM58 263h1V281h-1zM59 261h1V278h-1zM60 261h1V278h-1zM61 261h1V278h-1zM62 261h1V278h-1zM63 261h1V278h-1zM64 263h1V278h-1zM65 261h1V280h-1zM66 263h1V280h-1zM67 263h1V280h-1zM68 263h1V280h-1zM69 261h1V280h-1zM70 263h1V280h-1zM71 263h1V282h-1zM72 263h1V281h-1zM73 263h1V280h-1zM74 263h1V280h-1zM75 263h1V280h-1zM76 263h1V280h-1zM77 263h1V280h-1zM78 260h1V280h-1zM79 263h1V280h-1zM80 263h1V280h-1zM81 263h1V280h-1zM82 263h1V280h-1zM83 262h1V280h-1zM84 263h1V280h-1zM85 263h1V278h-1zM86 263h1V281h-1zM87 263h1V278h-1zM88 263h1V278h-1zM89 263h1V280h-1zM90 263h1V280h-1zM91 263h1V280h-1zM92 261h1V280h-1zM93 263h1V280h-1zM94 263h1V280h-1zM95 263h1V280h-1zM96 263h1V283h-1zM97 263h1V279h-1zM98 263h1V279h-1zM99 263h1V279h-1zM100 263h1V280h-1zM101 263h1V280h-1zM102 263h1V280h-1zM103 263h1V278h-1zM104 263h1V278h-1zM105 263h1V278h-1zM106 263h1V281h-1zM107 263h1V278h-1zM108 263h1V278h-1zM109 263h1V278h-1zM110 263h1V278h-1zM111 263h1V280h-1zM112 263h1V280h-1zM113 263h1V280h-1zM114 263h1V282h-1zM115 263h1V280h-1zM116 263h1V280h-1zM117 263h1V280h-1zM118 263h1V282h-1zM119 263h1V280h-1zM120 263h1V280h-1zM121 260h1V280h-1zM122 263h1V280h-1zM123 263h1V280h-1zM124 263h1V278h-1zM125 263h1V278h-1zM126 262h1V278h-1zM127 263h1V278h-1zM128 263h1V280h-1zM129 263h1V280h-1zM130 263h1V278h-1zM131 263h1V280h-1zM132 261h1V280h-1zM133 263h1V278h-1zM134 263h1V278h-1zM135 263h1V278h-1zM136 263h1V278h-1zM137 263h1V278h-1zM138 263h1V278h-1zM139 263h1V278h-1zM140 263h1V278h-1zM141 263h1V278h-1zM142 263h1V278h-1zM143 263h1V280h-1zM144 263h1V278h-1zM145 263h1V278h-1zM146 262h1V278h-1zM147 262h1V278h-1zM148 262h1V280h-1zM149 263h1V280h-1zM150 263h1V280h-1zM151 263h1V280h-1zM152 263h1V280h-1zM153 263h1V280h-1zM154 263h1V280h-1zM155 263h1V280h-1zM156 263h1V280h-1zM157 263h1V280h-1zM158 263h1V280h-1zM159 263h1V278h-1zM160 261h1V278h-1zM161 262h1V279h-1zM162 262h1V279h-1zM163 262h1V279h-1zM164 263h1V279h-1zM165 263h1V279h-1zM166 263h1V279h-1zM167 262h1V278h-1zM168 263h1V279h-1zM169 263h1V278h-1zM170 263h1V278h-1zM171 260h1V278h-1zM172 263h1V278h-1zM173 263h1V280h-1zM174 263h1V280h-1zM175 263h1V281h-1zM176 263h1V280h-1zM177 263h1V281h-1zM178 260h1V280h-1zM179 263h1V280h-1zM180 263h1V280h-1zM181 263h1V280h-1zM182 263h1V280h-1zM183 260h1V283h-1zM184 263h1V280h-1zM185 261h1V280h-1zM186 263h1V280h-1zM187 263h1V280h-1zM188 263h1V280h-1zM189 261h1V280h-1zM190 262h1V280h-1zM191 262h1V283h-1zM192 262h1V278h-1zM193 262h1V278h-1zM194 262h1V278h-1zM195 262h1V278h-1zM196 262h1V280h-1zM197 263h1V278h-1zM198 263h1V278h-1zM199 263h1V280h-1zM200 262h1V280h-1zM201 262h1V280h-1zM202 262h1V280h-1zM203 262h1V280h-1zM204 260h1V280h-1zM205 259h1V280h-1zM206 262h1V280h-1zM207 262h1V280h-1zM208 262h1V280h-1zM209 262h1V280h-1zM210 261h1V280h-1zM211 262h1V280h-1zM212 262h1V281h-1zM213 262h1V280h-1zM214 262h1V280h-1zM215 259h1V280h-1zM216 262h1V280h-1zM217 262h1V280h-1zM218 262h1V280h-1zM219 262h1V280h-1zM220 262h1V280h-1zM221 259h1V278h-1zM222 262h1V278h-1zM223 262h1V278h-1zM224 262h1V278h-1zM225 262h1V278h-1zM226 262h1V279h-1zM227 262h1V281h-1zM228 263h1V279h-1zM229 263h1V279h-1zM230 263h1V279h-1zM231 263h1V282h-1zM232 263h1V281h-1zM233 263h1V281h-1zM234 261h1V281h-1zM235 263h1V281h-1zM236 263h1V282h-1zM237 263h1V281h-1zM238 261h1V281h-1zM239 263h1V281h-1zM240 263h1V281h-1zM241 263h1V281h-1zM242 263h1V281h-1zM243 263h1V279h-1zM244 263h1V281h-1zM245 263h1V279h-1zM246 263h1V279h-1zM247 264h1V279h-1zM248 264h1V279h-1zM249 264h1V279h-1zM250 265h1V280h-1zM251 265h1V281h-1zM252 265h1V280h-1zM253 265h1V281h-1zM254 265h1V282h-1zM255 265h1V282h-1zM256 265h1V282h-1zM257 265h1V285h-1zM258 265h1V282h-1zM259 263h1V282h-1zM260 263h1V282h-1zM261 263h1V283h-1zM262 263h1V283h-1zM263 263h1V283h-1zM264 265h1V283h-1zM265 265h1V283h-1zM266 265h1V283h-1zM267 265h1V283h-1zM268 265h1V283h-1zM269 265h1V283h-1zM270 265h1V281h-1zM271 265h1V281h-1zM272 265h1V281h-1zM273 265h1V281h-1zM274 265h1V281h-1zM275 265h1V281h-1zM276 265h1V281h-1zM277 265h1V281h-1zM278 263h1V281h-1zM279 263h1V281h-1zM280 263h1V281h-1zM281 261h1V281h-1zM282 263h1V281h-1zM283 265h1V281h-1zM284 265h1V281h-1zM285 265h1V281h-1zM286 265h1V281h-1zM287 265h1V281h-1zM288 265h1V281h-1zM289 265h1V281h-1zM290 265h1V281h-1zM291 265h1V281h-1zM292 265h1V281h-1zM293 265h1V281h-1zM294 263h1V281h-1zM295 263h1V281h-1zM296 263h1V283h-1zM297 263h1V283h-1zM298 263h1V283h-1zM299 265h1V282h-1zM300 262h1V282h-1zM301 265h1V282h-1zM302 265h1V282h-1zM303 265h1V282h-1zM304 264h1V283h-1zM305 262h1V283h-1zM306 264h1V283h-1zM307 264h1V283h-1zM308 264h1V283h-1zM309 265h1V283h-1zM310 265h1V285h-1zM311 265h1V284h-1zM312 265h1V283h-1zM313 265h1V283h-1zM314 265h1V283h-1zM315 265h1V283h-1zM316 265h1V283h-1zM317 265h1V283h-1zM318 265h1V283h-1zM319 265h1V283h-1zM320 265h1V283h-1zM321 265h1V283h-1zM322 265h1V283h-1zM323 265h1V283h-1zM324 265h1V283h-1zM325 265h1V283h-1zM326 265h1V283h-1zM327 265h1V283h-1zM328 265h1V283h-1zM329 265h1V283h-1zM330 265h1V286h-1zM331 265h1V283h-1zM332 265h1V283h-1zM333 265h1V283h-1zM334 265h1V283h-1zM335 265h1V283h-1zM336 265h1V283h-1zM337 263h1V283h-1zM338 263h1V283h-1zM339 263h1V283h-1zM340 265h1V282h-1zM341 265h1V282h-1zM342 265h1V282h-1zM343 265h1V282h-1zM344 265h1V282h-1zM345 265h1V282h-1zM346 265h1V281h-1zM347 265h1V281h-1zM348 263h1V281h-1zM349 263h1V281h-1zM350 263h1V281h-1zM351 265h1V281h-1zM352 265h1V281h-1zM353 265h1V281h-1zM354 265h1V280h-1zM355 265h1V280h-1zM356 265h1V280h-1zM357 265h1V280h-1zM358 265h1V280h-1zM359 265h1V280h-1zM360 265h1V280h-1zM361 265h1V280h-1zM362 265h1V282h-1zM363 264h1V282h-1zM364 264h1V282h-1zM365 264h1V283h-1zM366 264h1V282h-1zM367 264h1V282h-1zM368 264h1V282h-1zM369 264h1V285h-1zM370 265h1V282h-1zM371 264h1V282h-1zM372 264h1V282h-1zM373 264h1V282h-1zM374 265h1V282h-1zM375 265h1V284h-1zM376 265h1V282h-1zM377 265h1V282h-1zM378 265h1V282h-1zM379 265h1V282h-1zM380 265h1V282h-1zM381 265h1V280h-1zM382 265h1V280h-1zM383 265h1V283h-1zM384 265h1V280h-1zM385 265h1V280h-1zM386 263h1V282h-1zM387 265h1V280h-1zM388 265h1V282h-1zM389 265h1V282h-1zM390 265h1V282h-1zM391 265h1V282h-1zM392 265h1V282h-1zM393 265h1V282h-1zM394 265h1V282h-1zM395 264h1V282h-1zM396 265h1V282h-1zM397 265h1V282h-1zM398 263h1V280h-1zM399 263h1V280h-1zM400 263h1V280h-1zM401 265h1V280h-1zM402 262h1V280h-1zM403 265h1V280h-1zM404 265h1V280h-1zM405 265h1V283h-1zM406 265h1V282h-1zM407 265h1V282h-1zM408 265h1V282h-1zM409 265h1V282h-1zM410 265h1V282h-1zM411 264h1V285h-1zM412 264h1V282h-1zM413 264h1V282h-1zM414 265h1V285h-1zM415 265h1V282h-1zM416 265h1V282h-1zM417 265h1V282h-1zM418 265h1V282h-1zM419 265h1V282h-1zM420 265h1V281h-1zM421 265h1V280h-1zM422 265h1V281h-1zM423 264h1V280h-1zM424 265h1V280h-1zM425 264h1V280h-1zM426 264h1V280h-1zM427 264h1V280h-1zM428 264h1V280h-1zM429 264h1V280h-1zM430 264h1V280h-1zM431 264h1V280h-1zM432 264h1V280h-1zM433 264h1V278h-1zM434 265h1V280h-1zM435 265h1V280h-1zM436 265h1V280h-1zM437 265h1V280h-1zM438 265h1V280h-1zM439 265h1V282h-1zM440 265h1V282h-1zM441 265h1V280h-1zM442 265h1V280h-1zM443 265h1V280h-1zM444 265h1V280h-1zM445 264h1V280h-1zM446 266h1V280h-1zM447 265h1V280h-1zM448 265h1V280h-1zM449 266h1V280h-1zM450 266h1V280h-1zM451 266h1V280h-1zM452 266h1V280h-1zM453 266h1V280h-1zM454 266h1V280h-1zM455 266h1V280h-1zM456 266h1V280h-1zM457 264h1V282h-1zM458 266h1V282h-1zM459 266h1V282h-1zM460 266h1V282h-1zM461 266h1V282h-1zM462 266h1V282h-1zM463 266h1V282h-1zM464 266h1V280h-1zM465 265h1V280h-1zM466 266h1V280h-1zM467 266h1V280h-1zM468 266h1V280h-1zM469 266h1V280h-1zM470 264h1V280h-1zM471 266h1V280h-1zM472 266h1V280h-1zM473 266h1V280h-1zM474 266h1V281h-1zM475 266h1V280h-1zM476 266h1V280h-1zM477 266h1V280h-1zM478 266h1V280h-1zM479 266h1V280h-1zM480 266h1V282h-1zM481 264h1V282h-1zM482 264h1V280h-1zM483 263h1V280h-1zM484 264h1V280h-1zM485 264h1V280h-1zM486 263h1V280h-1zM487 266h1V280h-1zM488 266h1V280h-1zM489 266h1V280h-1zM490 266h1V282h-1zM491 266h1V282h-1zM492 266h1V282h-1zM493 266h1V282h-1zM494 266h1V282h-1zM495 263h1V281h-1zM496 266h1V284h-1zM497 266h1V281h-1zM498 266h1V282h-1zM499 264h1V282h-1zM500 264h1V280h-1zM501 264h1V280h-1zM502 264h1V280h-1zM503 264h1V280h-1zM504 265h1V280h-1zM505 265h1V281h-1zM506 265h1V284h-1zM507 264h1V281h-1zM508 264h1V281h-1zM509 265h1V281h-1zM510 265h1V281h-1zM511 266h1V281h-1zM512 266h1V280h-1zM513 265h1V280h-1zM514 266h1V282h-1zM515 266h1V282h-1zM516 266h1V282h-1zM517 263h1V282h-1zM518 266h1V282h-1zM519 266h1V281h-1zM520 266h1V284h-1zM521 265h1V281h-1zM522 265h1V281h-1zM523 265h1V282h-1zM524 265h1V282h-1zM525 260h1V282h-1zM526 263h1V282h-1zM527 263h1V280h-1zM528 265h1V282h-1zM529 265h1V282h-1zM530 263h1V282h-1zM531 263h1V282h-1zM532 265h1V282h-1zM533 265h1V280h-1zM534 265h1V280h-1zM535 265h1V280h-1zM536 265h1V280h-1zM537 265h1V280h-1zM538 263h1V280h-1zM539 265h1V280h-1zM540 265h1V280h-1zM541 265h1V280h-1zM542 265h1V282h-1zM543 263h1V282h-1zM544 263h1V282h-1zM545 263h1V282h-1zM546 263h1V281h-1zM547 265h1V283h-1zM548 265h1V280h-1zM549 265h1V280h-1zM550 265h1V280h-1zM551 265h1V280h-1zM552 265h1V282h-1zM553 265h1V282h-1zM554 265h1V282h-1zM555 265h1V282h-1zM556 262h1V282h-1zM557 265h1V285h-1zM558 265h1V282h-1zM559 265h1V282h-1zM560 265h1V282h-1zM561 265h1V282h-1zM562 265h1V282h-1zM563 265h1V282h-1zM564 265h1V282h-1zM565 265h1V285h-1zM566 263h1V282h-1zM567 263h1V280h-1zM568 263h1V280h-1zM569 263h1V280h-1zM570 262h1V280h-1zM571 265h1V280h-1zM572 265h1V280h-1zM573 265h1V282h-1zM574 265h1V280h-1zM575 265h1V280h-1zM576 265h1V280h-1zM577 265h1V280h-1zM578 265h1V280h-1zM579 265h1V280h-1zM580 265h1V280h-1zM581 265h1V282h-1zM582 265h1V285h-1zM583 265h1V282h-1zM584 265h1V282h-1zM585 264h1V282h-1zM586 264h1V282h-1zM587 264h1V282h-1zM588 264h1V282h-1zM589 264h1V282h-1zM590 265h1V282h-1zM591 262h1V282h-1zM592 265h1V282h-1zM593 265h1V280h-1zM594 264h1V280h-1zM595 263h1V282h-1zM596 265h1V282h-1zM597 265h1V282h-1zM598 265h1V282h-1zM599 264h1V285h-1zM600 265h1V282h-1zM601 265h1V282h-1zM602 265h1V283h-1zM603 265h1V282h-1zM604 265h1V282h-1zM605 265h1V282h-1zM606 265h1V282h-1zM607 263h1V282h-1zM608 263h1V282h-1zM609 263h1V282h-1zM610 263h1V282h-1zM611 263h1V282h-1zM612 263h1V282h-1zM613 263h1V282h-1zM614 265h1V282h-1zM615 265h1V282h-1zM616 265h1V282h-1zM617 263h1V282h-1zM618 263h1V282h-1zM619 265h1V282h-1zM620 265h1V281h-1zM621 265h1V281h-1zM622 265h1V283h-1zM623 265h1V281h-1zM624 265h1V282h-1zM625 265h1V280h-1zM626 265h1V281h-1zM627 265h1V282h-1zM628 265h1V282h-1zM629 265h1V282h-1zM630 265h1V282h-1zM631 265h1V282h-1zM632 265h1V282h-1zM633 265h1V282h-1zM634 265h1V282h-1zM635 263h1V282h-1zM636 265h1V282h-1zM637 265h1V282h-1zM638 265h1V282h-1zM639 265h1V282h-1zM640 265h1V282h-1zM641 265h1V280h-1zM642 265h1V280h-1zM643 265h1V280h-1zM644 265h1V280h-1zM645 263h1V280h-1zM646 265h1V280h-1zM647 265h1V280h-1zM648 265h1V280h-1zM649 265h1V280h-1zM650 262h1V280h-1zM651 265h1V280h-1zM652 265h1V280h-1zM653 265h1V280h-1zM654 265h1V280h-1zM655 264h1V282h-1zM656 264h1V282h-1zM657 264h1V282h-1zM658 264h1V282h-1zM659 262h1V282h-1zM660 263h1V282h-1zM661 263h1V282h-1zM662 265h1V282h-1zM663 265h1V282h-1zM664 265h1V282h-1zM665 262h1V282h-1zM666 265h1V282h-1zM667 265h1V282h-1zM668 265h1V282h-1zM669 263h1V282h-1zM670 263h1V280h-1zM671 265h1V280h-1zM672 265h1V280h-1zM673 265h1V280h-1zM674 265h1V280h-1zM675 265h1V280h-1zM676 265h1V282h-1zM677 265h1V282h-1zM678 265h1V282h-1zM679 264h1V282h-1zM680 264h1V282h-1zM681 264h1V282h-1zM682 265h1V282h-1zM683 265h1V282h-1zM684 265h1V282h-1zM685 265h1V282h-1zM686 263h1V283h-1zM687 265h1V282h-1zM688 263h1V282h-1zM689 265h1V283h-1zM690 265h1V280h-1zM691 265h1V280h-1zM692 265h1V281h-1zM693 265h1V281h-1zM694 263h1V281h-1zM695 263h1V281h-1zM696 263h1V282h-1zM697 263h1V282h-1zM698 263h1V282h-1zM699 265h1V283h-1zM700 263h1V282h-1zM701 263h1V280h-1zM702 263h1V283h-1zM703 265h1V280h-1zM704 265h1V280h-1zM705 265h1V280h-1zM706 263h1V280h-1zM707 265h1V280h-1zM708 265h1V282h-1zM709 262h1V282h-1zM710 265h1V282h-1zM711 265h1V282h-1zM712 265h1V282h-1zM713 265h1V282h-1zM714 265h1V282h-1zM715 265h1V282h-1zM716 265h1V282h-1zM717 265h1V282h-1zM718 265h1V282h-1zM719 265h1V282h-1zM720 265h1V282h-1zM721 265h1V282h-1zM722 265h1V282h-1zM723 265h1V283h-1zM724 265h1V282h-1zM725 265h1V282h-1zM726 265h1V282h-1zM727 265h1V282h-1zM728 264h1V282h-1zM729 264h1V282h-1zM730 264h1V280h-1zM731 265h1V280h-1zM732 265h1V280h-1zM733 265h1V280h-1zM734 265h1V280h-1zM735 265h1V280h-1zM736 265h1V280h-1zM737 265h1V280h-1zM738 265h1V282h-1zM739 265h1V282h-1zM740 265h1V282h-1zM741 265h1V282h-1zM742 265h1V282h-1zM743 265h1V282h-1zM744 265h1V282h-1zM745 265h1V285h-1zM746 265h1V282h-1zM747 265h1V282h-1zM748 265h1V282h-1zM749 264h1V282h-1zM750 264h1V282h-1zM751 264h1V282h-1zM752 264h1V284h-1zM753 264h1V282h-1zM754 265h1V282h-1zM755 265h1V282h-1zM756 265h1V280h-1zM757 265h1V280h-1zM758 265h1V280h-1zM759 265h1V280h-1zM760 265h1V280h-1zM761 262h1V280h-1zM762 265h1V282h-1zM763 265h1V282h-1zM764 265h1V282h-1zM765 265h1V282h-1zM766 265h1V283h-1zM767 265h1V282h-1zM768 265h1V280h-1zM769 264h1V282h-1zM770 264h1V282h-1zM771 264h1V282h-1zM772 264h1V282h-1zM773 264h1V282h-1zM774 264h1V282h-1zM775 265h1V280h-1zM776 265h1V280h-1zM777 265h1V280h-1z"/>
</svg>
<svg class="a" style="left:394px;top:20px" width="15" height="16" viewBox="0 0 15 16">
 <path d="M1 1h12.5v10.2l-6.25 3.6l-6.25-3.6z" fill="#000" stroke="#9a2ae0" stroke-width="1.8"/>
 <path d="M3 4.7h8.5M7.25 4.7v6.8" stroke="#b43cf5" stroke-width="1.7"/>
</svg>
<svg class="a" style="left:0;top:260px" width="22" height="20" viewBox="0 0 22 20">
 <path d="M0.5 1.5h15l3.5 8.5l-3.5 8.5h-15z" fill="#000" stroke="#e00000" stroke-width="1"/>
</svg>
<svg class="a" style="left:0;top:260px" width="20" height="20"><path d="M5.3 8L9.3 5V16" fill="none" stroke="#e00000" stroke-width="1.5"/></svg>
<svg class="a" style="left:779px;top:261px" width="16" height="14"><path d="M1 6.5L15 0.5V13z" fill="#a020e0"/></svg>

<!-- channel info box -->
<div class="a" style="left:25px;top:477px;width:319px;height:40px;background:#0078d8"></div>
<div class="a" style="left:25px;top:477px;width:319px;height:1px;background:#3a7e9e"></div>
<div class="a" style="left:25px;top:477px;width:1px;height:40px;background:#62a8a8"></div>
<div class="a" style="left:342px;top:477px;width:2px;height:40px;background:#62a8a8"></div>
<div class="a" style="left:26px;top:478px;width:208px;height:19px;background:#000;border-radius:4px"></div>
<div class="a" style="left:26px;top:497px;width:208px;height:1px;background:#1a5a9a"></div>
<div class="a" style="left:26px;top:498px;width:208px;height:19px;background:#000;border-radius:4px"></div>
<div class="a" style="left:234px;top:478px;width:2px;height:39px;background:#62a8a8"></div>
<div class="a" style="left:236px;top:478px;width:106px;height:39px;background:#000;border-radius:4px"></div>
<svg class="a" style="left:27px;top:481px" width="16" height="16"><use href="#c1"/></svg>
<div class="t" style="left:42px;top:482px;color:#e00000">2<span class="z">0</span>.<span class="z">0</span>mVBW~<span class="z">0</span>.<span class="z">0</span><span class="z">0</span>div</div>
<svg class="a" style="left:27px;top:500px" width="16" height="16"><use href="#c2"/></svg>
<div class="t" style="left:42px;top:501px;color:#e8e800">2<span class="z">0</span>.<span class="z">0</span>mVBW~-2.<span class="z">0</span><span class="z">0</span>div</div>
<div class="t" style="left:253px;top:479px;color:#e8e8e8">(1GS/s)</div>
<div class="t" style="left:247px;top:499px;color:#e8e8e8">Depth:1M</div>

<!-- <2Hz -->
<div class="a" style="left:646px;top:498px;width:128px;height:20px;border:2px solid #62a8a8;border-radius:5px;background:#000"></div>
<svg class="a" style="left:649px;top:500px" width="16" height="16"><use href="#c1"/></svg>
<div class="t" style="left:668px;top:500px;color:#e8e8e8">&lt;2Hz</div>

<!-- bottom -->
<div class="a" style="left:0;top:518px;width:319px;height:80px;background:#62a8a8"></div>
<div class="a" style="left:1px;top:520px;width:316px;height:76px;background:#000;border-radius:4px"></div>
<div class="a" style="left:319px;top:519px;width:481px;height:1px;background:#62a8a8"></div>
<div class="a" style="left:319px;top:538px;width:481px;height:60px;background:#0862aa"></div>
<div class="a" style="left:0;top:598px;width:800px;height:2px;background:#0078d8"></div>

<svg class="a" style="left:1px;top:521px" width="16" height="16"><use href="#c1"/></svg>
<div class="t" style="left:20px;top:521px;color:#e00000">Vk:2.429mv</div>
<svg class="a" style="left:1px;top:540px" width="16" height="16"><use href="#c2"/></svg>
<div class="t" style="left:20px;top:540px;color:#e8e800">Vk:OFF</div>
<svg class="a" style="left:1px;top:560px" width="16" height="16"><use href="#c1"/></svg>
<div class="t" style="left:20px;top:560px;color:#e00000">Os:  ?</div>
<svg class="a" style="left:1px;top:579px" width="16" height="16"><use href="#c1"/></svg>
<div class="t" style="left:20px;top:579px;color:#e00000">RT:  ?</div>

<svg class="a" style="left:161px;top:521px" width="16" height="16"><use href="#c1"/></svg>
<div class="t" style="left:180px;top:521px;color:#e00000">Vp:9.6<span class="z">0</span><span class="z">0</span>mv</div>
<svg class="a" style="left:161px;top:540px" width="16" height="16"><use href="#c2"/></svg>
<div class="t" style="left:180px;top:540px;color:#e8e800">Vp:OFF</div>
<svg class="a" style="left:161px;top:560px" width="16" height="16"><use href="#c1"/></svg>
<div class="t" style="left:180px;top:560px;color:#e00000">Ps:  ?</div>
<svg class="a" style="left:161px;top:579px" width="16" height="16"><use href="#c1"/></svg>
<div class="t" style="left:180px;top:579px;color:#e00000">FT:  ?</div>

<div class="pill" style="left:319px;top:520px;width:100px;height:18px"></div>
<div class="t" style="left:337px;top:521px;color:#e8e8e8">M:5<span class="z">0</span>us</div>
<div class="pill" style="left:665px;top:520px;width:129px;height:18px"></div>
<svg class="a" style="left:667px;top:521px" width="16" height="16"><use href="#c1"/></svg>
<svg class="a" style="left:684px;top:521px" width="22" height="16"><path d="M1 14.5h8l4-12h7" fill="none" stroke="#e8e8e8" stroke-width="1.3"/></svg>
<div class="t" style="left:707px;top:521px;color:#e8e8e8"><span class="z">0</span>.8<span class="z">0</span>mV</div>

<div class="btn" style="left:323px;width:88px"></div>
<div class="t" style="left:325px;top:550px;color:#000">Coupling</div>
<div class="hl" style="left:356px;top:571px;width:20px"></div>
<div class="t" style="left:355px;top:574px;color:#000">AC</div>
<div class="btn" style="left:415px;width:88px"></div>
<div class="t" style="left:418px;top:550px;color:#000">Inverted</div>
<div class="hl" style="left:466px;top:571px;width:30px"></div>
<div class="t" style="left:424px;top:574px;color:#000">ON  OFF</div>
<div class="btn" style="left:507px;width:88px"></div>
<div class="t" style="left:525px;top:562px;color:#000">Probe</div>
<div class="btn" style="left:598px;width:88px"></div>
<div class="t" style="left:615px;top:550px;color:#000">Limit</div>
<div class="hl" style="left:626px;top:571px;width:30px"></div>
<div class="t" style="left:625px;top:574px;color:#000">2<span class="z">0</span>M</div>

<div class="a" style="left:779px;top:541px;width:19px;height:57px;background:#6aa0e0;border-radius:9px"></div>
<svg class="a" style="left:779px;top:560px" width="16" height="16"><use href="#c1"/></svg>
</body></html>
